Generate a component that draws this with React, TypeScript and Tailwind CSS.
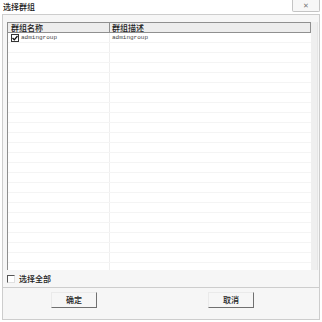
import { useState } from 'react';

interface Group {
  name: string;
  desc: string;
  checked: boolean;
}

const groups: Group[] = [{ name: 'admingroup', desc: 'admingroup', checked: true }];

const cjk = "font-['SimSun','Noto_Sans_CJK_SC',sans-serif]";

function Check({ on }: { on: boolean }) {
  if (!on) {
    return <div className="w-[8px] h-[8px] border-t border-l border-[#555] border-r border-b border-r-[#e0e0e0] border-b-[#e0e0e0] bg-white shrink-0" />;
  }
  return (
    <div className="w-[8px] h-[8px] border border-[#333] bg-white flex items-center justify-center shrink-0">
      <svg width="6" height="6" viewBox="0 0 6 6">
        <path d="M0.5 3 L2.3 4.8 L5.5 1" stroke="#111" strokeWidth="1.3" fill="none" />
      </svg>
    </div>
  );
}

export default function App() {
  const [rows] = useState(groups);
  const blanks = Array.from({ length: 24 - rows.length });

  return (
    <div className={`w-[322px] h-[322px] bg-white overflow-hidden ${cjk} text-[8px] font-medium text-[#222] antialiased`}>
      <div className="h-[14px] flex items-start justify-between">
        <span className="pl-[3px] pt-[2px] leading-[10px]">选择群组</span>
        <div className="w-[28px] h-[12px] mr-[2px] border border-t-0 border-[#c4c4c4] rounded-b-[2px] bg-[#f7f7f7] flex items-center justify-center text-[7px] font-normal text-[#777] leading-none">
          ✕
        </div>
      </div>

      <div className="mx-[2px] h-[306px] border border-[#cdcdcd] bg-[#f6f6f6] flex flex-col">
        <div className="mt-[7px] ml-[4px] mr-[1px] h-[248px] flex border-l border-[#8e8e8e] bg-white">
          <div className="flex-1 flex flex-col overflow-hidden">
            <div className="h-[11px] shrink-0 flex bg-[#ededed] border-y border-[#909090] border-r border-r-[#909090] leading-[9px]">
              <div className="w-[102px] pl-[3px] border-r border-[#909090]">群组名称</div>
              <div className="flex-1 pl-[2px]">群组描述</div>
            </div>
            {rows.map((g) => (
              <div key={g.name} className="h-[10px] shrink-0 flex border-b border-[#f4f4f4] font-['Liberation_Mono',monospace] font-normal text-[6px] leading-[9px] text-[#444]">
                <div className="w-[102px] pl-[3px] flex items-center gap-[2px] border-r border-[#efefef]">
                  <Check on={g.checked} />
                  <span>{g.name}</span>
                </div>
                <div className="flex-1 pl-[2px] flex items-center">{g.desc}</div>
              </div>
            ))}
            {blanks.map((_, i) => (
              <div key={i} className="h-[10px] shrink-0 flex border-b border-[#f4f4f4]">
                <div className="w-[102px] border-r border-[#efefef]" />
              </div>
            ))}
          </div>
          <div className="w-[7px] bg-[#efefef] border-r border-[#e6e6e6]" />
        </div>

        <div className="h-[17px] flex items-center pl-[4px] gap-[4px]">
          <Check on={false} />
          <span className="leading-[9px]">选择全部</span>
        </div>

        <div className="border-t border-[#cdcdcd]" />

        <div className="flex pt-[4px]">
          <div className="ml-[48px] w-[46px] h-[16px] border border-[#eaeaea] border-r-[#707070] border-b-[#707070] bg-[#f6f6f6] flex items-center justify-center leading-none">
            确定
          </div>
          <div className="ml-[111px] w-[46px] h-[16px] border border-[#eaeaea] border-r-[#707070] border-b-[#707070] bg-[#f6f6f6] flex items-center justify-center leading-none">
            取消
          </div>
        </div>
      </div>
    </div>
  );
}
